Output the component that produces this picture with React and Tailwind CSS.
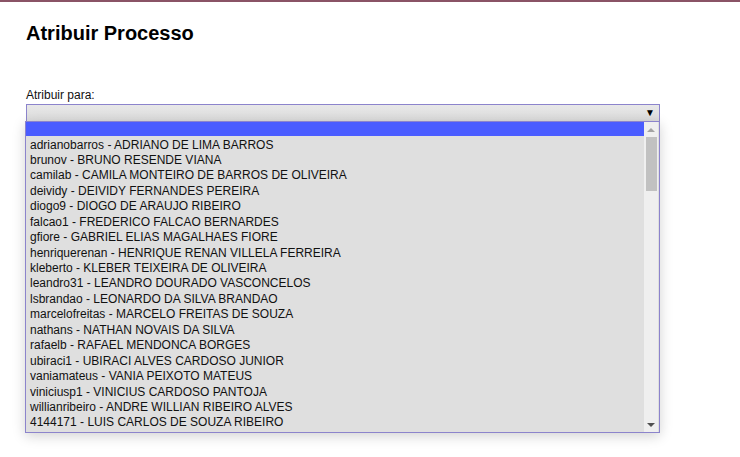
import React from "react";

const options = [
  "adrianobarros - ADRIANO DE LIMA BARROS",
  "brunov - BRUNO RESENDE VIANA",
  "camilab - CAMILA MONTEIRO DE BARROS DE OLIVEIRA",
  "deividy - DEIVIDY FERNANDES PEREIRA",
  "diogo9 - DIOGO DE ARAUJO RIBEIRO",
  "falcao1 - FREDERICO FALCAO BERNARDES",
  "gfiore - GABRIEL ELIAS MAGALHAES FIORE",
  "henriquerenan - HENRIQUE RENAN VILLELA FERREIRA",
  "kleberto - KLEBER TEIXEIRA DE OLIVEIRA",
  "leandro31 - LEANDRO DOURADO VASCONCELOS",
  "lsbrandao - LEONARDO DA SILVA BRANDAO",
  "marcelofreitas - MARCELO FREITAS DE SOUZA",
  "nathans - NATHAN NOVAIS DA SILVA",
  "rafaelb - RAFAEL MENDONCA BORGES",
  "ubiraci1 - UBIRACI ALVES CARDOSO JUNIOR",
  "vaniamateus - VANIA PEIXOTO MATEUS",
  "viniciusp1 - VINICIUS CARDOSO PANTOJA",
  "willianribeiro - ANDRE WILLIAN RIBEIRO ALVES",
  "4144171 - LUIS CARLOS DE SOUZA RIBEIRO",
];

export default function App() {
  return (
    <div className="w-[740px] h-[457px] bg-white overflow-hidden text-black" style={{ fontFamily: '"Liberation Sans", Arial, sans-serif' }}>
      <div className="h-[2px] bg-[#8a5366]" />
      <div className="pl-[26px]">
        <h1 className="mt-[20px] text-[20px] leading-[23px] font-bold">Atribuir Processo</h1>
        <div className="mt-[43px] text-[12px] leading-[14px] text-[#111]">Atribuir para:</div>
        <div className="relative w-[634px]">
          <div className="mt-[2px] h-[18px] border border-[#8c84cc] bg-gradient-to-b from-[#e8e8e8] to-[#dcdcdc] flex items-center justify-end pr-[4px]">
            <span className="text-[10px] leading-none">▼</span>
          </div>
          <div className="absolute left-[-1px] top-[17px] w-[635px] h-[312px] border border-[#8c84cc] bg-[#dfdfdf] shadow-[0_3px_12px_rgba(0,0,0,0.18)] flex">
            <div className="flex-1 text-[12px] leading-[15.44px] text-[#111]">
              <div className="h-[14px] bg-[#4a5cff]" />
              <div className="pt-[1.5px]">
                {options.map((o) => (
                  <div key={o} className="h-[15.44px] pl-[4px] whitespace-nowrap">{o}</div>
                ))}
              </div>
            </div>
            <div className="w-[14px] bg-[#efefef] flex flex-col items-center mr-[1px]">
              <div className="h-[15px] flex items-center justify-center">
                <div className="w-0 h-0 border-l-[4px] border-r-[4px] border-b-[4px] border-l-transparent border-r-transparent border-b-[#a3a3a3]" />
              </div>
              <div className="w-[11px] h-[54px] bg-[#c1c1c1]" />
              <div className="flex-1" />
              <div className="h-[15px] flex items-center justify-center">
                <div className="w-0 h-0 border-l-[4px] border-r-[4px] border-t-[4px] border-l-transparent border-r-transparent border-t-[#505050]" />
              </div>
            </div>
          </div>
        </div>
      </div>
    </div>
  );
}
